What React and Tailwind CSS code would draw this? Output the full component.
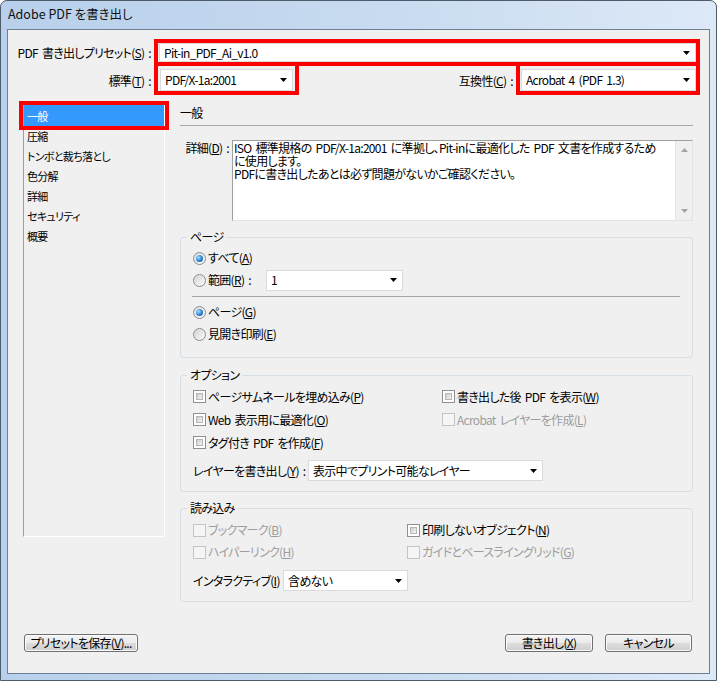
import React from 'react';

const U = ({ children }) => <span className="underline underline-offset-[1px]">{children}</span>;

const Arrow = ({ color = '#000' }) => (
  <svg width="7" height="4" viewBox="0 0 7 4" className="shrink-0">
    <path d="M0 0h7L3.5 4z" fill={color} />
  </svg>
);

const Select = ({ value, className = '' }) => (
  <div className={`flex items-center justify-between bg-white border border-[#dadada] pl-[4px] pr-[5px] whitespace-nowrap ${className}`}>
    <span>{value}</span>
    <Arrow />
  </div>
);

const Radio = ({ checked, children }) => (
  <div className="flex items-center gap-[2px] h-[22px]">
    <span className="w-[13px] h-[13px] rounded-full border border-[#8a8a8a] bg-[linear-gradient(135deg,#dcdcdc,#fbfbfb)] flex items-center justify-center">
      {checked ? (
        <span className="w-[7px] h-[7px] rounded-full bg-[radial-gradient(circle_at_35%_35%,#a6e0ff,#2079cc_60%,#11508e)]" />
      ) : (
        <span className="w-[9px] h-[9px] rounded-full bg-[linear-gradient(135deg,#d6d6d6,#f7f7f7)]" />
      )}
    </span>
    <span>{children}</span>
  </div>
);

const Check = ({ disabled, children }) => (
  <div className={`flex items-center gap-[2px] h-[23px] whitespace-nowrap ${disabled ? 'text-[#9d9d9d]' : ''}`}>
    <span
      className={`w-[13px] h-[13px] border p-[2px] ${
        disabled ? 'border-[#c4c4c4] bg-[#f5f5f5]' : 'border-[#8f8f8f] bg-white'
      }`}
    >
      {!disabled && (
        <span className="block w-full h-full border border-[#b5b5b5] bg-[linear-gradient(135deg,#cdcdcd,#f5f5f5)]" />
      )}
    </span>
    <span>{children}</span>
  </div>
);

const Button = ({ className = '', children }) => (
  <div
    className={`h-[18px] rounded-[3px] border border-[#707070] bg-[linear-gradient(#f3f3f3_0%,#ebebeb_50%,#dddddd_50%,#cfcfcf_100%)] shadow-[inset_0_0_0_1px_#fbfbfb] flex items-center justify-center whitespace-nowrap ${className}`}
  >
    {children}
  </div>
);

const Group = ({ title, className = '', children }) => (
  <fieldset className={`border border-[#d5dfe5] rounded-[3px] ${className}`}>
    <legend className="ml-[6px] px-[3px] leading-[14px]">{title}</legend>
    {children}
  </fieldset>
);

const navItems = ['圧縮', 'トンボと裁ち落とし', '色分解', '詳細', 'セキュリティ', '概要'];

export default function App() {
  return (
    <div className="w-[717px] h-[681px] bg-white text-[12px] leading-[14px] text-black [font-family:'Noto_Sans_CJK_JP','Noto_Sans',sans-serif] [font-feature-settings:'palt']">
      <div className="w-full h-full rounded-t-[7px] border border-[#4d5b6b] bg-[linear-gradient(90deg,#b8d0eb,#c8dbf0_55%,#dde9f7)] flex flex-col">
        {/* タイトルバー */}
        <div className="h-[28px] pl-[7px] pb-[2px] flex items-center text-[12.5px] text-[#111]">Adobe PDF を書き出し</div>

        {/* クライアント領域 */}
        <div className="ml-[6px] w-[703px] h-[645px] border border-[#6d7f94] bg-[#f0f0f0] tracking-[-0.7px] [word-spacing:2px]">
          <div className="pt-[9px] pr-[9px]">
            <div className="flex items-center h-[27px]">
              <div className="w-[146px] text-right pr-[3px] whitespace-nowrap">
                PDF 書き出しプリセット(<U>S</U>) :
              </div>
              <div className="flex-1 h-[27px] border-4 border-[#ff0000] pl-[1px]">
                <Select value="Pit-in_PDF_Ai_v1.0" className="h-[19px]" />
              </div>
            </div>
            <div className="flex items-center h-[29px]">
              <div className="w-[146px] text-right pr-[3px] whitespace-nowrap">
                標準(<U>T</U>) :
              </div>
              <div className="w-[145px] h-[29px] border-4 border-t-0 border-[#ff0000] pt-[3px] px-[2px]">
                <Select value="PDF/X-1a:2001" className="h-[22px]" />
              </div>
              <div className="flex-1 text-right pr-[3px] whitespace-nowrap">
                互換性(<U>C</U>) :
              </div>
              <div className="w-[184px] h-[29px] border-4 border-t-0 border-[#ff0000] pt-[3px] pl-[1px]">
                <Select value="Acrobat 4 (PDF 1.3)" className="h-[22px]" />
              </div>
            </div>
          </div>

          <div className="flex mt-[8px] pl-[15px] pr-[16px] gap-[15px]">
            {/* 左ナビ */}
            <div className="relative w-[142px] h-[434px] border border-t-[#a0a0a0] border-l-[#a0a0a0] border-r-white border-b-white text-[11px]">
              <div className="mt-[1px]">
                <div className="h-[21px] bg-[#3399ff] text-white pl-[3px] flex items-center">一般</div>
                {navItems.map((item) => (
                  <div key={item} className="h-[20px] pl-[3px] flex items-center whitespace-nowrap">
                    {item}
                  </div>
                ))}
              </div>
              <div className="absolute -left-[5px] -top-[3px] w-[150px] h-[29px] border-4 border-[#ff0000]" />
            </div>

            {/* 右パネル */}
            <div className="w-[513px]">
              <div className="h-[23px] border-b border-[#a8a8a8] leading-[20px]">一般</div>

              <div className="flex mt-[14px]">
                <div className="w-[52px] text-right pr-[3px] pt-[1px] whitespace-nowrap leading-[13px]">
                  詳細(<U>D</U>) :
                </div>
                <div className="w-[461px] h-[81px] bg-white border border-t-[#a0a0a0] border-l-[#a0a0a0] border-r-[#e3e3e3] border-b-[#e3e3e3] flex">
                  <div className="flex-1 pl-[1px] leading-[13px] whitespace-nowrap">
                    <div>ISO 標準規格の PDF/X-1a:2001 に準拠し、Pit-inに最適化した PDF 文書を作成するため</div>
                    <div>に使用します。</div>
                    <div>PDFに書き出したあとは必ず問題がないかご確認ください。</div>
                  </div>
                  <div className="w-[17px] bg-[#f0f0f0] border-l border-[#e6e6e6] flex flex-col items-center justify-between py-[7px]">
                    <svg width="7" height="4" viewBox="0 0 7 4">
                      <path d="M0 4h7L3.5 0z" fill="#a3a3a3" />
                    </svg>
                    <Arrow color="#a3a3a3" />
                  </div>
                </div>
              </div>

              <Group title="ページ" className="mt-[9px]">
                <div className="px-[12px] pt-[3px] pb-[12px]">
                  <Radio checked>
                    すべて(<U>A</U>)
                  </Radio>
                  <div className="flex items-center h-[22px]">
                    <div className="w-[73px]">
                      <Radio>
                        範囲(<U>R</U>) :
                      </Radio>
                    </div>
                    <Select value="1" className="w-[137px] h-[21px]" />
                  </div>
                  <div className="mt-[5px] -ml-px border-t border-[#a5a5a5]" />
                  <div className="mt-[4px]">
                    <Radio checked>
                      ページ(<U>G</U>)
                    </Radio>
                    <Radio>
                      見開き印刷(<U>E</U>)
                    </Radio>
                  </div>
                </div>
              </Group>

              <Group title="オプション" className="mt-[10px]">
                <div className="px-[12px] pt-[3px] pb-[10px]">
                  <div className="grid grid-cols-[249px_1fr]">
                    <Check>
                      ページサムネールを埋め込み(<U>P</U>)
                    </Check>
                    <Check>
                      書き出した後 PDF を表示(<U>W</U>)
                    </Check>
                    <Check>
                      Web 表示用に最適化(<U>O</U>)
                    </Check>
                    <Check disabled>
                      Acrobat レイヤーを作成(<U>L</U>)
                    </Check>
                    <Check>
                      タグ付き PDF を作成(<U>F</U>)
                    </Check>
                    <div />
                  </div>
                  <div className="flex items-center mt-[6px] h-[21px]">
                    <div className="w-[115px] whitespace-nowrap">
                      レイヤーを書き出し(<U>Y</U>) :
                    </div>
                    <Select value="表示中でプリント可能なレイヤー" className="w-[235px] h-[21px]" />
                  </div>
                </div>
              </Group>

              <Group title="読み込み" className="mt-[9px]">
                <div className="px-[12px] pt-[4px] pb-[10px]">
                  <div className="grid grid-cols-[214px_1fr] [&>*]:h-[22px]">
                    <Check disabled>
                      ブックマーク(<U>B</U>)
                    </Check>
                    <Check>
                      印刷しないオブジェクト(<U>N</U>)
                    </Check>
                    <Check disabled>
                      ハイパーリンク(<U>H</U>)
                    </Check>
                    <Check disabled>
                      ガイドとベースライングリッド(<U>G</U>)
                    </Check>
                  </div>
                  <div className="flex items-center mt-[7px] h-[21px]">
                    <div className="w-[90px] whitespace-nowrap">
                      インタラクティブ(<U>I</U>) :
                    </div>
                    <Select value="含めない" className="w-[125px] h-[21px]" />
                  </div>
                </div>
              </Group>
            </div>
          </div>

          {/* ボタン */}
          <div className="flex mt-[32px] pl-[16px] pr-[17px]">
            <Button className="w-[114px]">
              プリセットを保存(<U>V</U>)...
            </Button>
            <div className="flex-1" />
            <Button className="w-[88px]">
              書き出し(<U>X</U>)
            </Button>
            <Button className="w-[87px] ml-[12px]">キャンセル</Button>
          </div>
        </div>
      </div>
    </div>
  );
}
